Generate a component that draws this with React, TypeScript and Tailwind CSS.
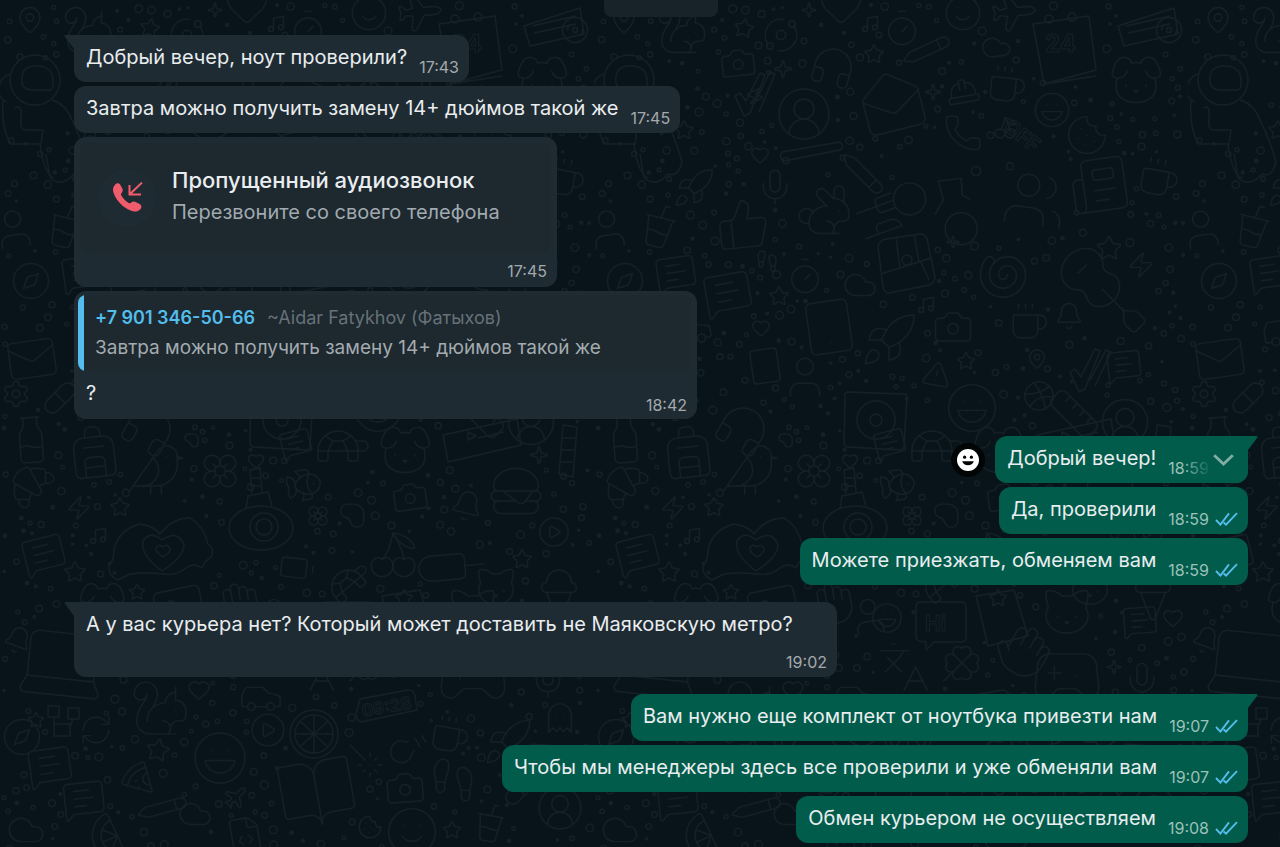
import React from 'react';
import {
  Backpack, Battery, Bell, Bike, Bird, BookOpen, Camera, Car, Cat, Cherry, CirclePlay, CircleUserRound, Citrus,
  Cloud, Clover, Coffee, Compass, Cookie, Croissant, CupSoda, Disc3, Dog, Dribbble, FileCode, Fish, Flower,
  Footprints, Gamepad2, Ghost, Guitar, Hamburger, Hand, HardHat, Headphones, Heart, IceCreamCone,
  Image as Picture, Languages, Laptop, Laugh, Lightbulb, LucideIcon, Mail, MailOpen, MapPin, MessageSquareText,
  Mic, Milk, Music, Newspaper, Orbit, PawPrint, Pencil, Phone, Pill, Pizza, Plane, Popsicle, Rabbit, RefreshCw,
  Rocket, Ruler, Settings, Shell, Smile, Sparkle, Squirrel, Star, Tablet, ThumbsUp, Timer, TriangleAlert, Turtle,
  User, Users, Utensils, Wand, Zap,
} from 'lucide-react';

const TILE_W = 594;
const TILE_H = 870;

// icon, centre x, centre y, size, rotation
type Doodle = [LucideIcon, number, number, number, number];

const doodles: Doodle[] = [
  [Orbit, 187, 35, 38, 0], [Camera, 144, 63, 38, -6], [Star, 150, 28, 22, 10], [Sparkle, 215, 10, 16, 0],
  [Heart, 247, 5, 46, 0], [Music, 276, 24, 20, 0], [Timer, 308, 28, 40, 0], [Pencil, 333, 50, 44, 20],
  [Smile, 369, 13, 40, 0], [Headphones, 239, 67, 48, 15], [Star, 280, 54, 22, 0], [Plane, 417, 12, 46, 40],
  [Cloud, 402, 47, 32, -8], [Coffee, 413, 85, 42, 6], [Zap, 161, 96, 20, 20], [CircleUserRound, 210, 114, 60, 0],
  [MailOpen, 298, 102, 68, -14], [HardHat, 369, 92, 36, -10], [Dog, 542, 80, 60, 0], [Laugh, 458, 110, 40, 0],
  [Sparkle, 189, 69, 20, 0], [Sparkle, 339, 92, 18, 0], [Phone, 369, 133, 40, 0],
  [Cherry, 411, 128, 24, 0], [Cookie, 493, 135, 44, 0], [Heart, 166, 155, 20, 0], [Mic, 181, 187, 40, 0],
  [Pencil, 269, 174, 46, 90], [Bike, 354, 192, 110, 30], [Users, 441, 200, 66, 8], [Newspaper, 505, 185, 62, -8],
  [Coffee, 565, 178, 44, 10], [ThumbsUp, 149, 224, 56, -6], [Rabbit, 230, 211, 60, 0], [Utensils, 284, 216, 46, 70],
  [Sparkle, 359, 242, 14, 0], [Shell, 409, 277, 54, 0], [Guitar, 509, 290, 100, 90],
  [Star, 515, 248, 28, 0], [Zap, 547, 265, 28, 0], [User, 14, 229, 48, -8], [Compass, 31, 281, 42, 0],
  [CupSoda, 65, 226, 50, 14], [MessageSquareText, 82, 274, 44, -8], [Cloud, 266, 285, 36, 0], [Timer, 211, 276, 40, 0],
  [Footprints, 173, 261, 24, 0], [Star, 185, 296, 22, 0], [MessageSquareText, 134, 294, 52, -10],
  [Tablet, 235, 327, 62, -8], [Rocket, 295, 340, 60, 0], [Camera, 359, 327, 42, 0], [Coffee, 435, 322, 42, 0],
  [Bell, 475, 316, 30, 0], [Music, 332, 305, 20, 0], [Tablet, 171, 366, 40, -8], [User, 211, 377, 50, 0],
  [Heart, 167, 328, 20, 0], [TriangleAlert, 343, 374, 30, 10], [Star, 372, 361, 20, 0],
  [Laugh, 378, 408, 56, 0], [Dribbble, 445, 396, 34, 0], [MapPin, 443, 359, 22, 0],
  [MessageSquareText, 530, 366, 38, -6], [Mail, 32, 359, 54, -8], [Ruler, 480, 414, 56, 0],
  [CircleUserRound, 531, 422, 54, 0], [Settings, 16, 394, 30, 0], [Pill, 60, 398, 36, 0], [Headphones, 149, 429, 56, 30],
  [PawPrint, 196, 436, 26, 0], [Heart, 256, 461, 18, 0], [Turtle, 343, 446, 60, 0],
  [Car, 96, 330, 48, -10], [Star, 90, 130, 22, 0], [Squirrel, 88, 30, 54, 0], [MapPin, 30, 20, 30, 0],
  [Rocket, 100, 188, 44, 0], [Milk, 31, 440, 54, -4], [Backpack, 94, 452, 60, -6], [Bird, 156, 470, 64, 0],
  [MessageSquareText, 296, 444, 34, -14], [Flower, 220, 471, 42, 0], [Dog, 405, 450, 60, 0], [Croissant, 33, 487, 50, 0],
  [Hamburger, 516, 491, 60, 0], [Fish, 304, 485, 40, -10], [PawPrint, 360, 508, 46, 0], [Camera, 410, 497, 38, -8],
  [Bell, 467, 506, 34, 14], [Star, 120, 507, 22, 0], [Zap, 79, 508, 26, 0],
  [MessageSquareText, 44, 555, 46, -14], [Music, 98, 536, 20, 0], [Flower, 318, 516, 24, 0],
  [Cherry, 393, 555, 52, 0], [Turtle, 349, 581, 50, -40], [Popsicle, 449, 567, 60, -50], [Cat, 496, 587, 46, 0],
  [IceCreamCone, 559, 595, 60, 0], [CirclePlay, 554, 532, 34, 0], [Battery, 297, 568, 38, 6], [Star, 75, 572, 24, 0],
  [Picture, 180, 612, 62, -12], [Hand, 237, 604, 48, -10], [Dog, 102, 604, 54, 0], [User, 275, 616, 44, -8],
  [Star, 137, 592, 18, 0], [Star, 522, 559, 22, 0], [Sparkle, 539, 455, 20, 0], [Laugh, 293, 618, 34, 0],
  [Star, 404, 598, 20, 0], [Cat, 473, 612, 56, 0], [MessageSquareText, 546, 622, 38, -4], [Heart, 579, 618, 22, 0],
  [Bell, 18, 640, 30, 20], [Hand, 429, 650, 58, 30], [Clover, 368, 663, 44, 0], [Languages, 310, 667, 56, 0],
  [Gamepad2, 473, 676, 76, 0], [Mic, 548, 680, 40, 0], [Laptop, 62, 662, 100, 6], [Sparkle, 520, 667, 16, 0],
  [RefreshCw, 96, 730, 34, 0], [Star, 36, 720, 18, 0], [Compass, 22, 737, 42, 0], [Squirrel, 160, 708, 62, 0],
  [Car, 261, 697, 46, 0], [Heart, 199, 690, 24, 0], [CirclePlay, 268, 730, 38, 0],
  [Laugh, 220, 758, 60, 0], [MessageSquareText, 50, 767, 48, -8], [MessageSquareText, 84, 800, 46, -6],
  [Pizza, 137, 777, 36, 0], [Pencil, 163, 808, 44, 30], [Cloud, 195, 814, 36, 0], [BookOpen, 317, 793, 84, -10],
  [Wand, 365, 760, 40, 90], [Lightbulb, 408, 748, 44, -120], [Coffee, 450, 735, 42, 10], [Camera, 405, 788, 42, -4],
  [Footprints, 453, 780, 50, 0], [Smile, 412, 832, 56, 0], [Cookie, 370, 827, 26, 0], [Star, 158, 750, 26, 10],
  [Star, 452, 830, 20, 0], [FileCode, 245, 835, 40, -10], [Citrus, 112, 838, 50, 20], [CupSoda, 490, 823, 44, 10],
  [Plane, 235, 798, 26, 0], [Rocket, 508, 742, 52, 0], [MessageSquareText, 545, 760, 40, 4], [Cloud, 26, 830, 40, 0],
  [Pill, 520, 790, 34, 0], [CircleUserRound, 560, 808, 50, 0], [Ghost, 560, 718, 34, 0], [Disc3, 575, 30, 30, 0],
];

// larger shapes drawn by hand below, kept clear of dots
const drawn: [number, number, number][] = [
  [40, 100, 80], [470, 48, 76], [554, 26, 60], [424, 140, 44], [219, 152, 50], [313, 263, 60], [282, 420, 66],
  [482, 444, 70], [568, 449, 44], [261, 524, 70], [162, 552, 100], [347, 622, 54], [314, 734, 54], [387, 710, 60],
  [402, 616, 50], [63, 720, 36], [166, 96, 36], [495, 370, 36],
];

// small rings and dots that fill the space between the doodles
const makeDots = () => {
  const dots: { x: number; y: number; r: number }[] = [];
  const taken = [...doodles.map(([, x, y, size]) => [x, y, size]), ...drawn];
  let seed = 7;
  const rand = () => {
    seed = (seed * 16807) % 2147483647;
    return seed / 2147483647;
  };
  for (let i = 0; i < 5200 && dots.length < 620; i++) {
    const x = 4 + rand() * (TILE_W - 8);
    const y = 4 + rand() * (TILE_H - 8);
    const r = 1 + rand() * 3;
    const free =
      taken.every(([dx, dy, size]) => Math.hypot(dx - x, dy - y) > size * 0.5 + r) &&
      dots.every((d) => Math.hypot(d.x - x, d.y - y) > d.r + r + 5);
    if (free) dots.push({ x, y, r });
  }
  return dots;
};

const dots = makeDots();

const Wallpaper: React.FC = () => (
  <svg className="absolute inset-0 h-full w-full text-[#142026]" aria-hidden="true">
    <defs>
      <pattern id="doodles" width={TILE_W} height={TILE_H} patternUnits="userSpaceOnUse">
        {doodles.map(([Icon, x, y, size, rotate], i) => (
          <g key={i} transform={`translate(${x} ${y}) rotate(${rotate})`}>
            <Icon x={-size / 2} y={-size / 2} size={size} strokeWidth={1.4} absoluteStrokeWidth />
          </g>
        ))}
        {dots.map((d, i) => (
          <circle key={i} cx={d.x} cy={d.y} r={d.r} fill={d.r < 1.8 ? 'currentColor' : 'none'} stroke="currentColor" strokeWidth="1.3" />
        ))}
        <g fill="none" stroke="currentColor" strokeWidth="1.4" strokeLinejoin="round" fontFamily="Inter, sans-serif" fontWeight="700">
          {/* calendar, ticket, badge */}
          <path d="M439 24l56-8 7 54-52 14zM450 84l52-8" />
          <circle cx="455" cy="19" r="4" />
          <circle cx="478" cy="17" r="4" />
          <text x="451" y="52" fontSize="24" strokeWidth="1">24</text>
          <path d="M524 26l56-18 4 26-54 12zM532 26l44-10M534 33l42-9" />
          <text x="408" y="130" fontSize="20" strokeWidth="1" transform="rotate(38 410 130)">OFF</text>
          <path d="M188 152l58-10q5 5 0 8l-56 11q-6-3-2-9z" />
          {/* astronaut */}
          <circle cx="35" cy="80" r="25" />
          <path d="M22 83q-2-16 12-17 14-1 18 8 3 14-2 16H32q-8 0-10-7zM10 74q-12 4-11 18 1 8 8 10M3 100q-2 30 8 44h30l2-14H26q-5 0-5-6v-14q-2-5-6-2M52 100q14 4 20 20 10 20 16 42-4 16-14 12-12 14-24 4l-4-24M40 144q4 30 14 34" />
          {/* double ticks */}
          <path d="M141 96l5-3 6 8 14-28 5 2-15 38-6 3zM160 104l16-32 5 2-16 38M476 372l5-3 6 8 14-28 5 2-15 38-6 3zM496 380l16-30 5 2-16 34" />
          {/* chest */}
          <path d="M284 246q2-6 8-7l34-5q5 0 7 5l8 38q0 6-6 8l-40 8q-5 0-6-6zM287 274l50-16M302 238l4 30M320 234l5 28M327 262l8 18" />
          <circle cx="313" cy="260" r="5" />
          {/* record player */}
          <path d="M254 392l56 2q3 0 3 4l-3 48q0 4-4 4l-52-3q-4 0-4-5l1-46q0-4 3-4z" />
          <circle cx="282" cy="420" r="19" />
          <circle cx="282" cy="420" r="6" />
          <path d="M443 435l74-16 4 26-73 17zM468 440v-8l8 4zM478 438l26-6" />
          <path d="M563 425l14 2-4 50-14-3zM562 438h13M561 450h13M560 462h13" />
          {/* perfume */}
          <ellipse cx="261" cy="528" rx="32" ry="22" />
          <circle cx="264" cy="527" r="14" />
          <circle cx="264" cy="527" r="8" />
          <path d="M246 508l2-12 20-4 4 14M252 494l-2-24 10-2 2 24M252 478h8M251 486h9" />
          {/* hands making a heart */}
          <path d="M118 580q-12-6-8-16 4-4 4-14 4-20 26-26 14 2 20 10 12-16 30-16 14 8 18 26 6 4 4 12-8 6-10 12-8-6-16 0-10 8-22 6-20-2-34 0-4 2-12 6zM162 540q-12-10-19 1-3 14 19 30 22-14 22-26-6-16-22-5z" />
          <path d="M163 547q-5-4-7 1 0 5 7 9 7-4 7-8-2-6-7-2z" />
          {/* speech bubble, clock, citrus slice */}
          <path d="M327 602h40q5 0 5 5v30q0 5-5 5h-27l-8 8v-8q-10 0-10-5v-30q0-5 5-5z" />
          <text x="331" y="631" fontSize="21" strokeWidth="1">Hi</text>
          <path d="M360 699l48-9q6 0 7 6l2 14-56 12q-4-1-5-8z" />
          <text x="363" y="717" fontSize="17" strokeWidth="1" transform="rotate(-10 363 717)">09:28</text>
          <circle cx="314" cy="734" r="24" />
          <circle cx="314" cy="734" r="19" />
          <path d="M314 715v38M295 734h38M300 721l28 26M328 721l-28 26" />
          <path d="M382 596l38-6 14 46-40 10z" />
          <path d="M48 706h11v11H48zM68 708h11v11H68zM54 724h16v12H54zM54 717v7M73 719l-3 8" />
        </g>
      </pattern>
    </defs>
    <rect width="100%" height="100%" fill="url(#doodles)" />
  </svg>
);

const Ticks: React.FC = () => (
  <svg className="h-3.5 w-[23px] text-[#53bdeb]" viewBox="0 0 23 14" fill="none" stroke="currentColor" strokeWidth="1.9" aria-label="Прочитано">
    <path d="M1 8l4.400 4.600L14 1.400M8.600 10.600l2.400 2L22 1.200" />
  </svg>
);

const Tail: React.FC<{ out?: boolean }> = ({ out }) =>
  out ? (
    <svg className="absolute top-0 -right-2.5 h-4 w-[11px] text-[#015c4b]" viewBox="0 0 11 16" fill="currentColor" aria-hidden="true">
      <path d="M0 0h9.200q2 0 1 1.800L1 14v2H0z" />
    </svg>
  ) : (
    <svg className="absolute top-0 -left-2.5 h-4 w-[11px] text-[#1f2b33]" viewBox="0 0 11 16" fill="currentColor" aria-hidden="true">
      <path d="M11 0H1.800q-2 0-1 1.800L10 14v2h1z" />
    </svg>
  );

const Time: React.FC<{ children: string; out?: boolean }> = ({ children, out }) => (
  <span className={`flex items-center gap-1.5 text-base leading-5 ${out ? 'text-[#9cc1ba]' : 'text-[#a3a9ad]'}`}>
    <time>{children}</time>
    {out && <Ticks />}
  </span>
);

const IN_BUBBLE = 'relative max-w-full rounded-xl bg-[#1f2b33]';

interface TextBubbleProps {
  text: string;
  time: string;
  out?: boolean;
  tail?: boolean;
  children?: React.ReactNode;
}

const TextBubble: React.FC<TextBubbleProps> = ({ text, time, out, tail, children }) => (
  <div
    className={`relative flex min-h-[47px] max-w-full items-end gap-3 rounded-xl pr-2.5 pl-3 ${out ? 'bg-[#015c4b]' : 'bg-[#1f2b33]'} ${
      tail ? (out ? 'rounded-tr-none' : 'rounded-tl-none') : ''
    }`}
  >
    {tail && <Tail out={out} />}
    <p className="pb-[11px] text-xl leading-7">{text}</p>
    <span className="pb-[5px]">
      <Time out={out}>{time}</Time>
    </span>
    {children}
  </div>
);

const MissedCall: React.FC = () => (
  <div className={`${IN_BUBBLE} flex w-[483px] flex-col p-1.5`}>
    <div className="flex h-[109px] items-center gap-4 rounded-lg bg-[#1d282f] pl-[18px]">
      <div className="flex h-[58px] w-[58px] shrink-0 items-center justify-center rounded-full bg-[#1f2b32]">
        <svg className="h-[31px] w-[31px] text-[#f15c6d]" viewBox="0 0 31 31" aria-hidden="true">
          <path
            fill="currentColor"
            d="M3.2 2.6C4.8.8 7.2.9 8.4 3l1.9 3.6c.9 1.8.5 3-.7 4.3-.8.9-.8 1.7-.2 2.7 1.8 3.2 4.2 5.6 7.3 7.3 1 .6 1.8.5 2.6-.3 1.3-1.3 2.6-1.6 4.3-.7l4 2.1c2.2 1.2 2.4 3.6.7 5.2-2.3 2.4-5.7 3.1-9.7 1.4C10.6 25.3 4.8 19.2 1.8 11.6.4 8 .8 5 3.2 2.6z"
          />
          <path fill="none" stroke="currentColor" strokeWidth="2" d="M17.500 3v9.600H29M17.800 12.300L30 .6" />
        </svg>
      </div>
      <div className="pb-1">
        <h2 className="text-[22px] leading-8 font-medium">Пропущенный аудиозвонок</h2>
        <p className="text-xl leading-8 text-[#a0aab0]">Перезвоните со своего телефона</p>
      </div>
    </div>
    <div className="flex justify-end pt-[9px] pr-1">
      <Time>17:45</Time>
    </div>
  </div>
);

const QuotedReply: React.FC = () => (
  <div className={`${IN_BUBBLE} w-[623px] p-1 pr-1.5`}>
    <blockquote className="overflow-hidden rounded-lg bg-[#1d282f]">
      <div className="border-l-[6px] border-[#53bdeb] px-[11px] py-2 leading-[30px]">
        <p className="flex gap-3 text-lg leading-[30px]">
          <span className="font-semibold text-[#53bdeb]">+7 901 346-50-66</span>
          <span className="text-[#667278]">~Aidar Fatykhov (Фатыхов)</span>
        </p>
        <p className="text-[19px] text-[#a3abaf]">Завтра можно получить замену 14+ дюймов такой же</p>
      </div>
    </blockquote>
    <div className="flex items-end justify-between pt-2 pr-1 pl-2">
      <p className="pb-2 text-xl leading-7">?</p>
      <Time>18:42</Time>
    </div>
  </div>
);

const App: React.FC = () => {
  return (
    <div className="relative min-h-screen overflow-hidden bg-[#09141a] font-['Inter','Liberation_Sans',sans-serif] text-[#e9edef]">
      <Wallpaper />
      <main className="relative flex flex-col gap-[17px] pr-8 pb-1 pl-[74px]">
        <div className="flex h-[18px] justify-center pb-px">
          <div className="w-[114px] rounded-b-lg bg-[#172229]" />
        </div>

        <section className="flex flex-col items-start gap-1">
          <TextBubble tail text="Добрый вечер, ноут проверили?" time="17:43" />
          <TextBubble text="Завтра можно получить замену 14+ дюймов такой же" time="17:45" />
          <MissedCall />
          <QuotedReply />
        </section>

        <section className="flex flex-col items-end gap-1">
          <div className="flex max-w-full items-center gap-2.5">
            <button
              type="button"
              aria-label="Добавить реакцию"
              className="flex h-[34px] w-[34px] shrink-0 items-center justify-center rounded-full bg-[#020506]"
            >
              <svg className="h-[22px] w-[22px]" viewBox="0 0 22 22" aria-hidden="true">
                <circle cx="11" cy="11" r="11" fill="#fff" />
                <circle cx="7.6" cy="8.2" r="1.6" fill="#020506" />
                <circle cx="14.4" cy="8.2" r="1.6" fill="#020506" />
                <path d="M5.200 12.200h11.600c-.8 2.600-3 4-5.800 4s-5-1.400-5.800-4z" fill="#020506" />
              </svg>
            </button>
            <TextBubble out tail text="Добрый вечер!" time="18:59">
              <button
                type="button"
                aria-label="Меню сообщения"
                className="absolute inset-y-0 right-0 flex w-[66px] items-center justify-end rounded-br-xl bg-linear-to-r from-transparent to-[#015c4b] to-45% pr-3.5"
              >
                <svg className="h-3 w-[21px]" viewBox="0 0 21 12" fill="none" stroke="#80ada4" strokeWidth="2.8" aria-hidden="true">
                  <path d="M1.200 1.200l9.300 8.800 9.300-8.800" />
                </svg>
              </button>
            </TextBubble>
          </div>
          <TextBubble out text="Да, проверили" time="18:59" />
          <TextBubble out text="Можете приезжать, обменяем вам" time="18:59" />
        </section>

        <section className="flex flex-col items-start gap-1">
          <div className={`${IN_BUBBLE} w-[763px] rounded-tl-none pt-2 pr-2.5 pb-[5px] pl-3`}>
            <Tail />
            <p className="text-xl leading-7">А у вас курьера нет? Который может доставить не Маяковскую метро?</p>
            <div className="flex justify-end pt-3.5">
              <Time>19:02</Time>
            </div>
          </div>
        </section>

        <section className="flex flex-col items-end gap-1">
          <TextBubble out tail text="Вам нужно еще комплект от ноутбука привезти нам" time="19:07" />
          <TextBubble out text="Чтобы мы менеджеры здесь все проверили и уже обменяли вам" time="19:07" />
          <TextBubble out text="Обмен курьером не осуществляем" time="19:08" />
        </section>
      </main>
    </div>
  );
};

export default App;
